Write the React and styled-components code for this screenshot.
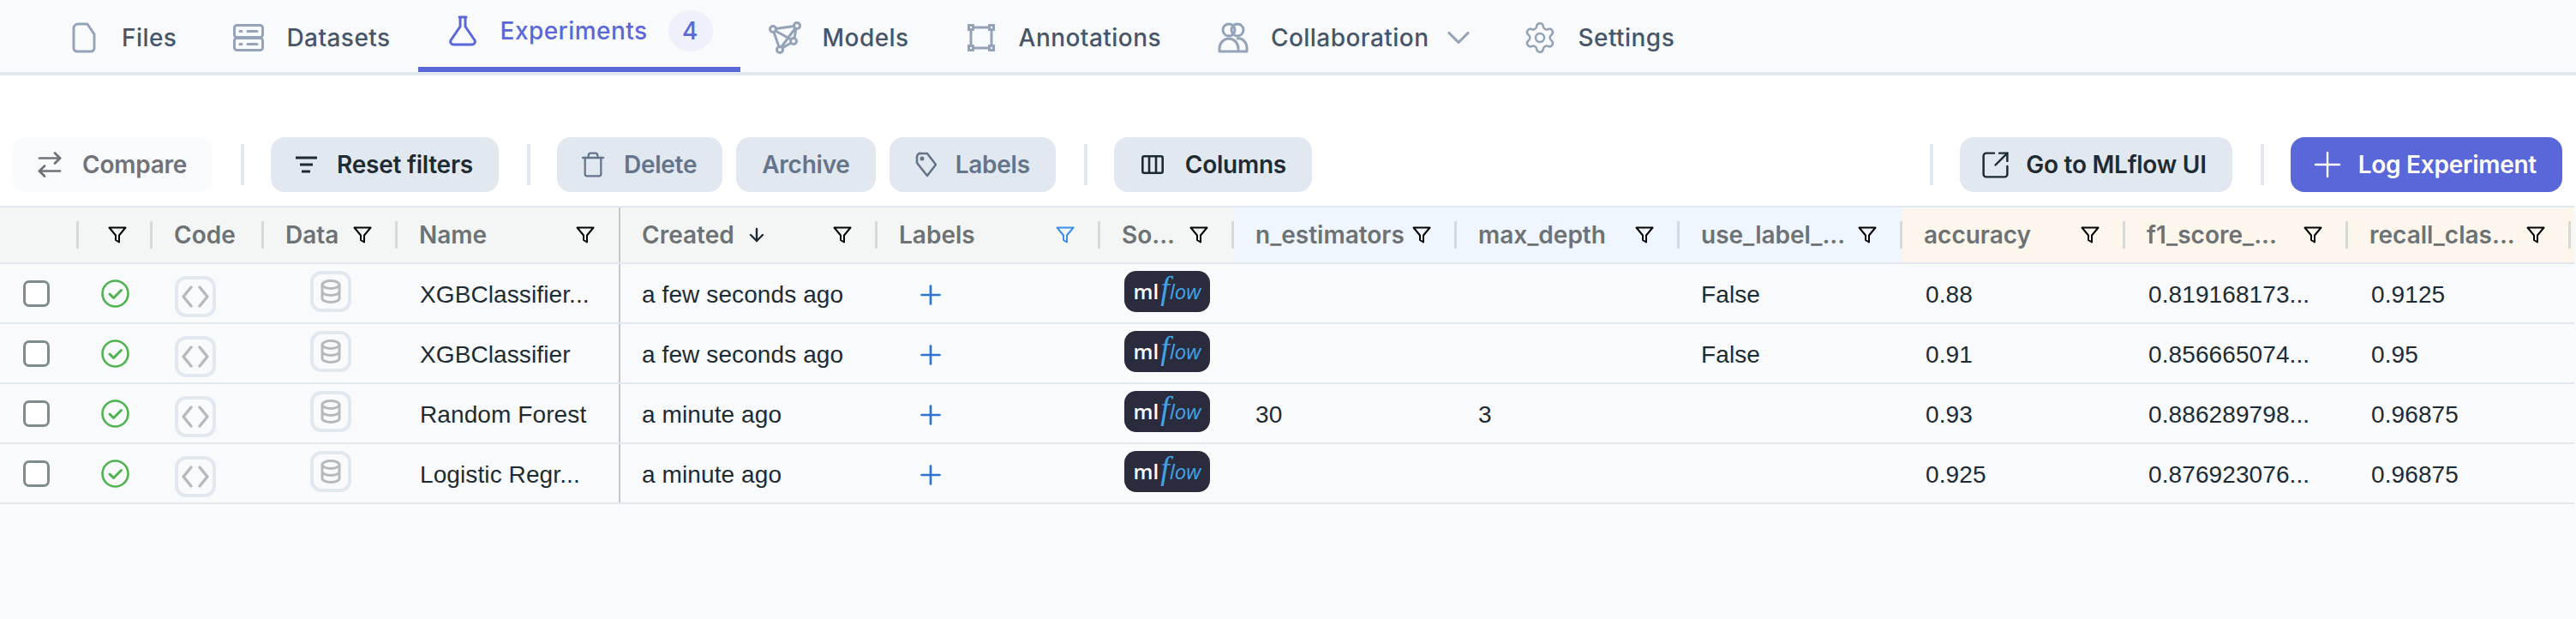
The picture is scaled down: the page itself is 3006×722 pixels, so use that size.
import React from "react";
import styled, { createGlobalStyle } from "styled-components";
import {
  ArrowRightLeft,
  ChevronDown,
  ArrowDown,
  Plus,
  Settings,
  SquareArrowOutUpRight,
  Trash,
} from "lucide-react";

const COLUMNS = "92px 86px 130px 156px 260px 300px 260px 156px 260px 260px 260px 260px 260px 260px 4px";

const GlobalStyle = createGlobalStyle`
  html, body {
    margin: 0;
    padding: 0;
    background: #f8fafc;
    overflow: hidden;
  }
  * { box-sizing: border-box; }
`;

const Page = styled.div`
  width: 3006px;
  min-height: 722px;
  background: #f8fafc;
  font-family: Inter, "Liberation Sans", sans-serif;
`;

const Nav = styled.nav`
  display: flex;
  height: 88px;
  padding-left: 46px;
  background: #f8fafc;
  border-bottom: 4px solid #e2e8f0;
`;

const Tab = styled.div`
  display: flex;
  align-items: center;
  height: 84px;
  padding: ${(p) => (p.$active ? "0 32px 6px" : "4px 32px 0")};
  font-size: 28px;
  font-weight: 500;
  letter-spacing: 0.45px;
  color: ${(p) => (p.$active ? "#5a67d8" : "#475569")};
  border-bottom: ${(p) => (p.$active ? "6px solid #5a67d8" : "none")};
`;

const TabIcon = styled.span`
  display: flex;
  justify-content: center;
  width: 40px;
  margin-right: 24px;
  color: ${(p) => (p.$active ? "#5a67d8" : "#94a3b8")};
`;

const Badge = styled.span`
  display: flex;
  align-items: center;
  justify-content: center;
  width: 52px;
  height: 48px;
  margin-left: 24px;
  border-radius: 50%;
  background: #eef0fb;
`;

const TabChevron = styled.span`
  display: flex;
  margin: 0 -11px 0 13px;
  color: #94a3b8;
`;

const Toolbar = styled.div`
  display: flex;
  align-items: center;
  padding: 72px 16px 16px 14px;
  background: #fff;
`;

const ToolGroup = styled.div`
  display: flex;
  align-items: center;
  gap: 16px;
`;

const Spacer = styled.div`
  flex: 1;
`;

const ToolDivider = styled.div`
  width: 4px;
  height: 48px;
  margin: 0 31px 0 33px;
  background: #e2e8f0;
`;

const ToolButton = styled.button`
  display: flex;
  align-items: center;
  gap: ${(p) => (p.$gap !== undefined ? p.$gap : 20)}px;
  height: 64px;
  padding: 0 30px 0 ${(p) => (p.$left !== undefined ? p.$left : 30)}px;
  border: none;
  border-radius: 16px;
  font-family: inherit;
  font-size: 28px;
  font-weight: 600;
  letter-spacing: -0.25px;
  white-space: nowrap;
  background: ${(p) =>
    p.$kind === "primary" ? "#5a67d8" : p.$kind === "ghost" ? "#f8fafc" : "#e2e8f0"};
  color: ${(p) =>
    p.$kind === "primary"
      ? "#fff"
      : p.$kind === "ghost"
      ? "#71717a"
      : p.$kind === "muted"
      ? "#64748b"
      : "#1e2b32"};
`;

const Table = styled.div`
  width: 3004px;
  border-top: 2px solid #e2e8f0;
`;

const HeadRow = styled.div`
  display: grid;
  grid-template-columns: ${COLUMNS};
  height: 66px;
  border-bottom: 2px solid #e2e8f0;
`;

const tints = {
  param: "#eff6ff",
  metric: "#fdf6ed",
};

const HeadCell = styled.div`
  display: flex;
  align-items: center;
  min-width: 0;
  padding-left: 25px;
  font-size: 28px;
  font-weight: 600;
  white-space: nowrap;
  color: #6d7274;
  background: ${(p) => tints[p.$tint] || "#f4f6f6"};
  border-right: ${(p) => (p.$pinned ? "2px solid #c5c9cf" : "none")};
`;

const HeadEnd = styled.div`
  background: ${tints.metric};
`;

const HeadLabel = styled.span`
  flex: 1;
  display: flex;
  align-items: center;
  gap: 14px;
`;

const FilterWrap = styled.span`
  display: flex;
  color: ${(p) => (p.$active ? "#3b8eea" : "#000")};
  margin-right: ${(p) => (p.$pinned ? "28px" : "27px")};
`;

const HeadDivider = styled.span`
  flex: none;
  width: 3px;
  height: 32px;
  background: #d6d9dc;
`;

const Row = styled.div`
  display: grid;
  grid-template-columns: ${COLUMNS};
  height: 70px;
  border-bottom: 2px solid #e2e8f0;
  background: #f8fafc;
`;

const Cell = styled.div`
  display: flex;
  align-items: ${(p) => (p.$top !== undefined ? "flex-start" : "center")};
  min-width: 0;
  padding-left: ${(p) => (p.$left !== undefined ? p.$left : 25)}px;
  padding-top: ${(p) => p.$top || 0}px;
`;

const TextCell = styled.div`
  display: flex;
  align-items: center;
  min-width: 0;
  padding: 4px 0 0 ${(p) => (p.$left !== undefined ? p.$left : 25)}px;
  font-family: "Liberation Sans", Arial, sans-serif;
  font-size: 28px;
  letter-spacing: 0.1px;
  white-space: nowrap;
  color: #1e2b32;
  border-right: ${(p) => (p.$pinned ? "2px solid #c5c9cf" : "none")};
`;

const CheckBox = styled.span`
  width: 31px;
  height: 31px;
  border: 3px solid #7f8c8d;
  border-radius: 7px;
  background: #fff;
`;

const IconBox = styled.span`
  display: flex;
  align-items: center;
  justify-content: center;
  width: 48px;
  height: 48px;
  border: 4px solid #e2e8f0;
  border-radius: 13px;
  color: #b6b9bd;
`;

const AddLabel = styled.span`
  display: flex;
  padding-top: 4px;
  color: #2f74d0;
`;

const LogoBadge = styled.span`
  display: flex;
  align-items: center;
  justify-content: center;
  width: 100px;
  height: 48px;
  border-radius: 14px;
  background: #2a2b3d;
  font-family: "Open Sans", sans-serif;
  font-size: 24px;
  font-weight: 600;
  line-height: 1;
  color: #fff;
`;

const LogoFlow = styled.span`
  font-style: italic;
  font-weight: 500;
  color: #43a2e6;
`;

const LogoF = styled.span`
  font-family: "Liberation Serif", serif;
  font-size: 38px;
  line-height: 0;
  margin: 0 0 0 2px;
`;

const FileIcon = () => (
  <svg width="28" height="36" viewBox="0 0 28 36" fill="none" stroke="currentColor" strokeWidth="3">
    <path d="M7 2h11l8 12v16a4 4 0 0 1-4 4H6a4 4 0 0 1-4-4V7a5 5 0 0 1 5-5z" strokeLinejoin="round" />
  </svg>
);

const DatasetIcon = () => (
  <svg width="36" height="32" viewBox="0 0 36 32" fill="none" stroke="currentColor" strokeWidth="3">
    <rect x="1.5" y="1.5" width="33" height="14" rx="3" />
    <rect x="1.5" y="16.5" width="33" height="14" rx="3" />
    <path d="M8 8.5h2M17 8.5h11M8 23.5h2M17 23.5h11" strokeLinecap="round" />
  </svg>
);

const FlaskIcon = () => (
  <svg width="34" height="36" viewBox="0 0 34 36" fill="none" stroke="currentColor" strokeWidth="3" strokeLinejoin="round">
    <path d="M13 2h8M14 2v11L3 29a3.5 3.5 0 0 0 3 5h22a3.5 3.5 0 0 0 3-5L20 13V2" strokeLinecap="round" />
  </svg>
);

const ModelIcon = () => (
  <svg width="38" height="38" viewBox="0 0 38 38" fill="none" stroke="currentColor" strokeWidth="3">
    <circle cx="5" cy="9" r="3.5" />
    <circle cx="33" cy="5" r="3.5" />
    <circle cx="29" cy="23" r="3.5" />
    <circle cx="13" cy="33" r="3.5" />
    <path d="M8.5 8.5 29.5 5.5M6 12.5l6 17M32 8.5 30 19.5M26 25l-10 6M8 11l18 10M15 29.5 31 8" />
  </svg>
);

const AnnotationIcon = () => (
  <svg width="32" height="32" viewBox="0 0 32 32" fill="none" stroke="currentColor" strokeWidth="3">
    <rect x="1.5" y="1.5" width="5" height="5" />
    <rect x="25.5" y="1.5" width="5" height="5" />
    <rect x="1.5" y="25.5" width="5" height="5" />
    <rect x="25.5" y="25.5" width="5" height="5" />
    <path d="M6.5 4h19M6.5 28h19M4 6.5v19M28 6.5v19" />
  </svg>
);

const CollabIcon = () => (
  <svg width="36" height="36" viewBox="0 0 36 36" fill="none" stroke="currentColor" strokeWidth="3">
    <circle cx="13" cy="9" r="7" />
    <circle cx="23" cy="9" r="7" />
    <path d="M2 34v-3c0-7 5-12 11-12s11 5 11 12v3zM22 19c7-1 12 4 12 12v3H24" strokeLinejoin="round" />
  </svg>
);

const FilterIcon = () => (
  <svg width="22" height="20" viewBox="0 0 22 20" fill="none" stroke="currentColor" strokeWidth="2" strokeLinejoin="round">
    <path d="M1.5 1.5h19L13 10.5v8l-4-2.5v-5.5z" />
  </svg>
);

const FilterBars = () => (
  <svg width="25" height="20" viewBox="0 0 25 20" fill="none" stroke="currentColor" strokeWidth="3">
    <path d="M0 2h25M5 10h15M7 18h10" />
  </svg>
);

const TagIcon = () => (
  <svg width="26" height="30" viewBox="0 0 26 30" fill="none" stroke="currentColor" strokeWidth="2.6" strokeLinejoin="round">
    <path d="M7 2h7l10 13-10 13L2 13V6a4 4 0 0 1 5-4z" />
    <circle cx="8" cy="8" r="1.2" fill="currentColor" />
  </svg>
);

const ColumnsIcon = () => (
  <svg width="26" height="22" viewBox="0 0 26 22" fill="none" stroke="currentColor" strokeWidth="2.6">
    <rect x="1.3" y="1.3" width="23.4" height="19.4" rx="2" />
    <path d="M9 1.3v19.4M17 1.3v19.4" />
  </svg>
);

const CheckCircle = () => (
  <svg width="33" height="33" viewBox="0 0 33 33" fill="none" stroke="#4fb34f" strokeWidth="2.6">
    <circle cx="16.5" cy="16.5" r="15" />
    <path d="M10 17l4.5 4.5 9-9" strokeWidth="3" strokeLinecap="round" strokeLinejoin="round" />
  </svg>
);

const CodeIcon = () => (
  <svg width="32" height="26" viewBox="0 0 32 26" fill="none" stroke="currentColor" strokeWidth="3.4" strokeLinecap="round" strokeLinejoin="round">
    <path d="M11 2 2 13l9 11M21 2l9 11-9 11" />
  </svg>
);

const DataIcon = () => (
  <svg width="24" height="28" viewBox="0 0 24 28" fill="none" stroke="currentColor" strokeWidth="3">
    <ellipse cx="12" cy="6" rx="10" ry="4.5" />
    <path d="M2 6v16c0 2.5 4.5 4.5 10 4.5s10-2 10-4.5V6M2 14c0 2.5 4.5 4.5 10 4.5s10-2 10-4.5" />
  </svg>
);

const tabs = [
  { label: "Files", icon: <FileIcon /> },
  { label: "Datasets", icon: <DatasetIcon /> },
  { label: "Experiments", icon: <FlaskIcon />, active: true, count: 4 },
  { label: "Models", icon: <ModelIcon /> },
  { label: "Annotations", icon: <AnnotationIcon /> },
  { label: "Collaboration", icon: <CollabIcon />, menu: true },
  { label: "Settings", icon: <Settings size={40} strokeWidth={1.5} /> },
];

const heads = [
  { label: "", filter: false },
  { label: "", filter: true },
  { label: "Code", filter: false },
  { label: "Data", filter: true },
  { label: "Name", filter: true, pinned: true },
  { label: "Created", filter: true, sort: true },
  { label: "Labels", filter: true, active: true },
  { label: "So...", filter: true },
  { label: "n_estimators", filter: true, tint: "param" },
  { label: "max_depth", filter: true, tint: "param" },
  { label: "use_label_...", filter: true, tint: "param" },
  { label: "accuracy", filter: true, tint: "metric" },
  { label: "f1_score_...", filter: true, tint: "metric" },
  { label: "recall_clas...", filter: true, tint: "metric" },
];

const rows = [
  { name: "XGBClassifier...", created: "a few seconds ago", label: "False", acc: "0.88", f1: "0.819168173...", recall: "0.9125" },
  { name: "XGBClassifier", created: "a few seconds ago", label: "False", acc: "0.91", f1: "0.856665074...", recall: "0.95" },
  { name: "Random Forest", created: "a minute ago", est: "30", depth: "3", acc: "0.93", f1: "0.886289798...", recall: "0.96875" },
  { name: "Logistic Regr...", created: "a minute ago", acc: "0.925", f1: "0.876923076...", recall: "0.96875" },
];

const App = () => {
  return (
    <Page>
      <GlobalStyle />
      <Nav>
        {tabs.map((tab) => (
          <Tab key={tab.label} $active={tab.active}>
            <TabIcon $active={tab.active}>{tab.icon}</TabIcon>
            {tab.label}
            {tab.count && <Badge>{tab.count}</Badge>}
            {tab.menu && (
              <TabChevron>
                <ChevronDown size={44} strokeWidth={1.7} />
              </TabChevron>
            )}
          </Tab>
        ))}
      </Nav>

      <Toolbar>
        <ToolButton $kind="ghost" $left={26} $gap={20}>
          <ArrowRightLeft size={36} strokeWidth={1.8} />
          Compare
        </ToolButton>
        <ToolDivider />
        <ToolButton $left={29} $gap={23}>
          <FilterBars />
          Reset filters
        </ToolButton>
        <ToolDivider />
        <ToolGroup>
          <ToolButton $kind="muted" $left={26} $gap={20}>
            <Trash size={32} strokeWidth={1.7} />
            Delete
          </ToolButton>
          <ToolButton $kind="muted">Archive</ToolButton>
          <ToolButton $kind="muted" $gap={21}>
            <TagIcon />
            Labels
          </ToolButton>
        </ToolGroup>
        <ToolDivider />
        <ToolButton $left={32} $gap={25}>
          <ColumnsIcon />
          Columns
        </ToolButton>
        <Spacer />
        <ToolDivider />
        <ToolButton $left={23} $gap={17}>
          <SquareArrowOutUpRight size={37} strokeWidth={1.6} />
          Go to MLflow UI
        </ToolButton>
        <ToolDivider />
        <ToolButton $kind="primary" $left={19} $gap={12}>
          <Plus size={48} strokeWidth={1.2} />
          Log Experiment
        </ToolButton>
      </Toolbar>

      <Table>
        <HeadRow>
          {heads.map((head, i) => (
            <HeadCell key={i} $tint={head.tint} $pinned={head.pinned}>
              <HeadLabel>
                {head.label}
                {head.sort && <ArrowDown size={24} strokeWidth={2.4} color="#1e2b32" />}
              </HeadLabel>
              {head.filter && (
                <FilterWrap $active={head.active} $pinned={head.pinned}>
                  <FilterIcon />
                </FilterWrap>
              )}
              {!head.pinned && <HeadDivider />}
            </HeadCell>
          ))}
          <HeadEnd />
        </HeadRow>

        {rows.map((row) => (
          <Row key={row.name + row.acc}>
            <Cell $left={27}>
              <CheckBox />
            </Cell>
            <Cell $left={26}>
              <CheckCircle />
            </Cell>
            <Cell $left={26} $top={14}>
              <IconBox>
                <CodeIcon />
              </IconBox>
            </Cell>
            <Cell $left={54} $top={8}>
              <IconBox>
                <DataIcon />
              </IconBox>
            </Cell>
            <TextCell $left={26} $pinned>
              {row.name}
            </TextCell>
            <TextCell>{row.created}</TextCell>
            <Cell $left={44}>
              <AddLabel>
                <Plus size={36} strokeWidth={1.8} />
              </AddLabel>
            </Cell>
            <Cell $left={28} $top={8}>
              <LogoBadge>
                ml
                <LogoFlow>
                  <LogoF>f</LogoF>low
                </LogoFlow>
              </LogoBadge>
            </Cell>
            <TextCell>{row.est}</TextCell>
            <TextCell>{row.depth}</TextCell>
            <TextCell>{row.label}</TextCell>
            <TextCell $left={27}>{row.acc}</TextCell>
            <TextCell $left={27}>{row.f1}</TextCell>
            <TextCell $left={27}>{row.recall}</TextCell>
            <Cell />
          </Row>
        ))}
      </Table>
    </Page>
  );
};

export default App;
